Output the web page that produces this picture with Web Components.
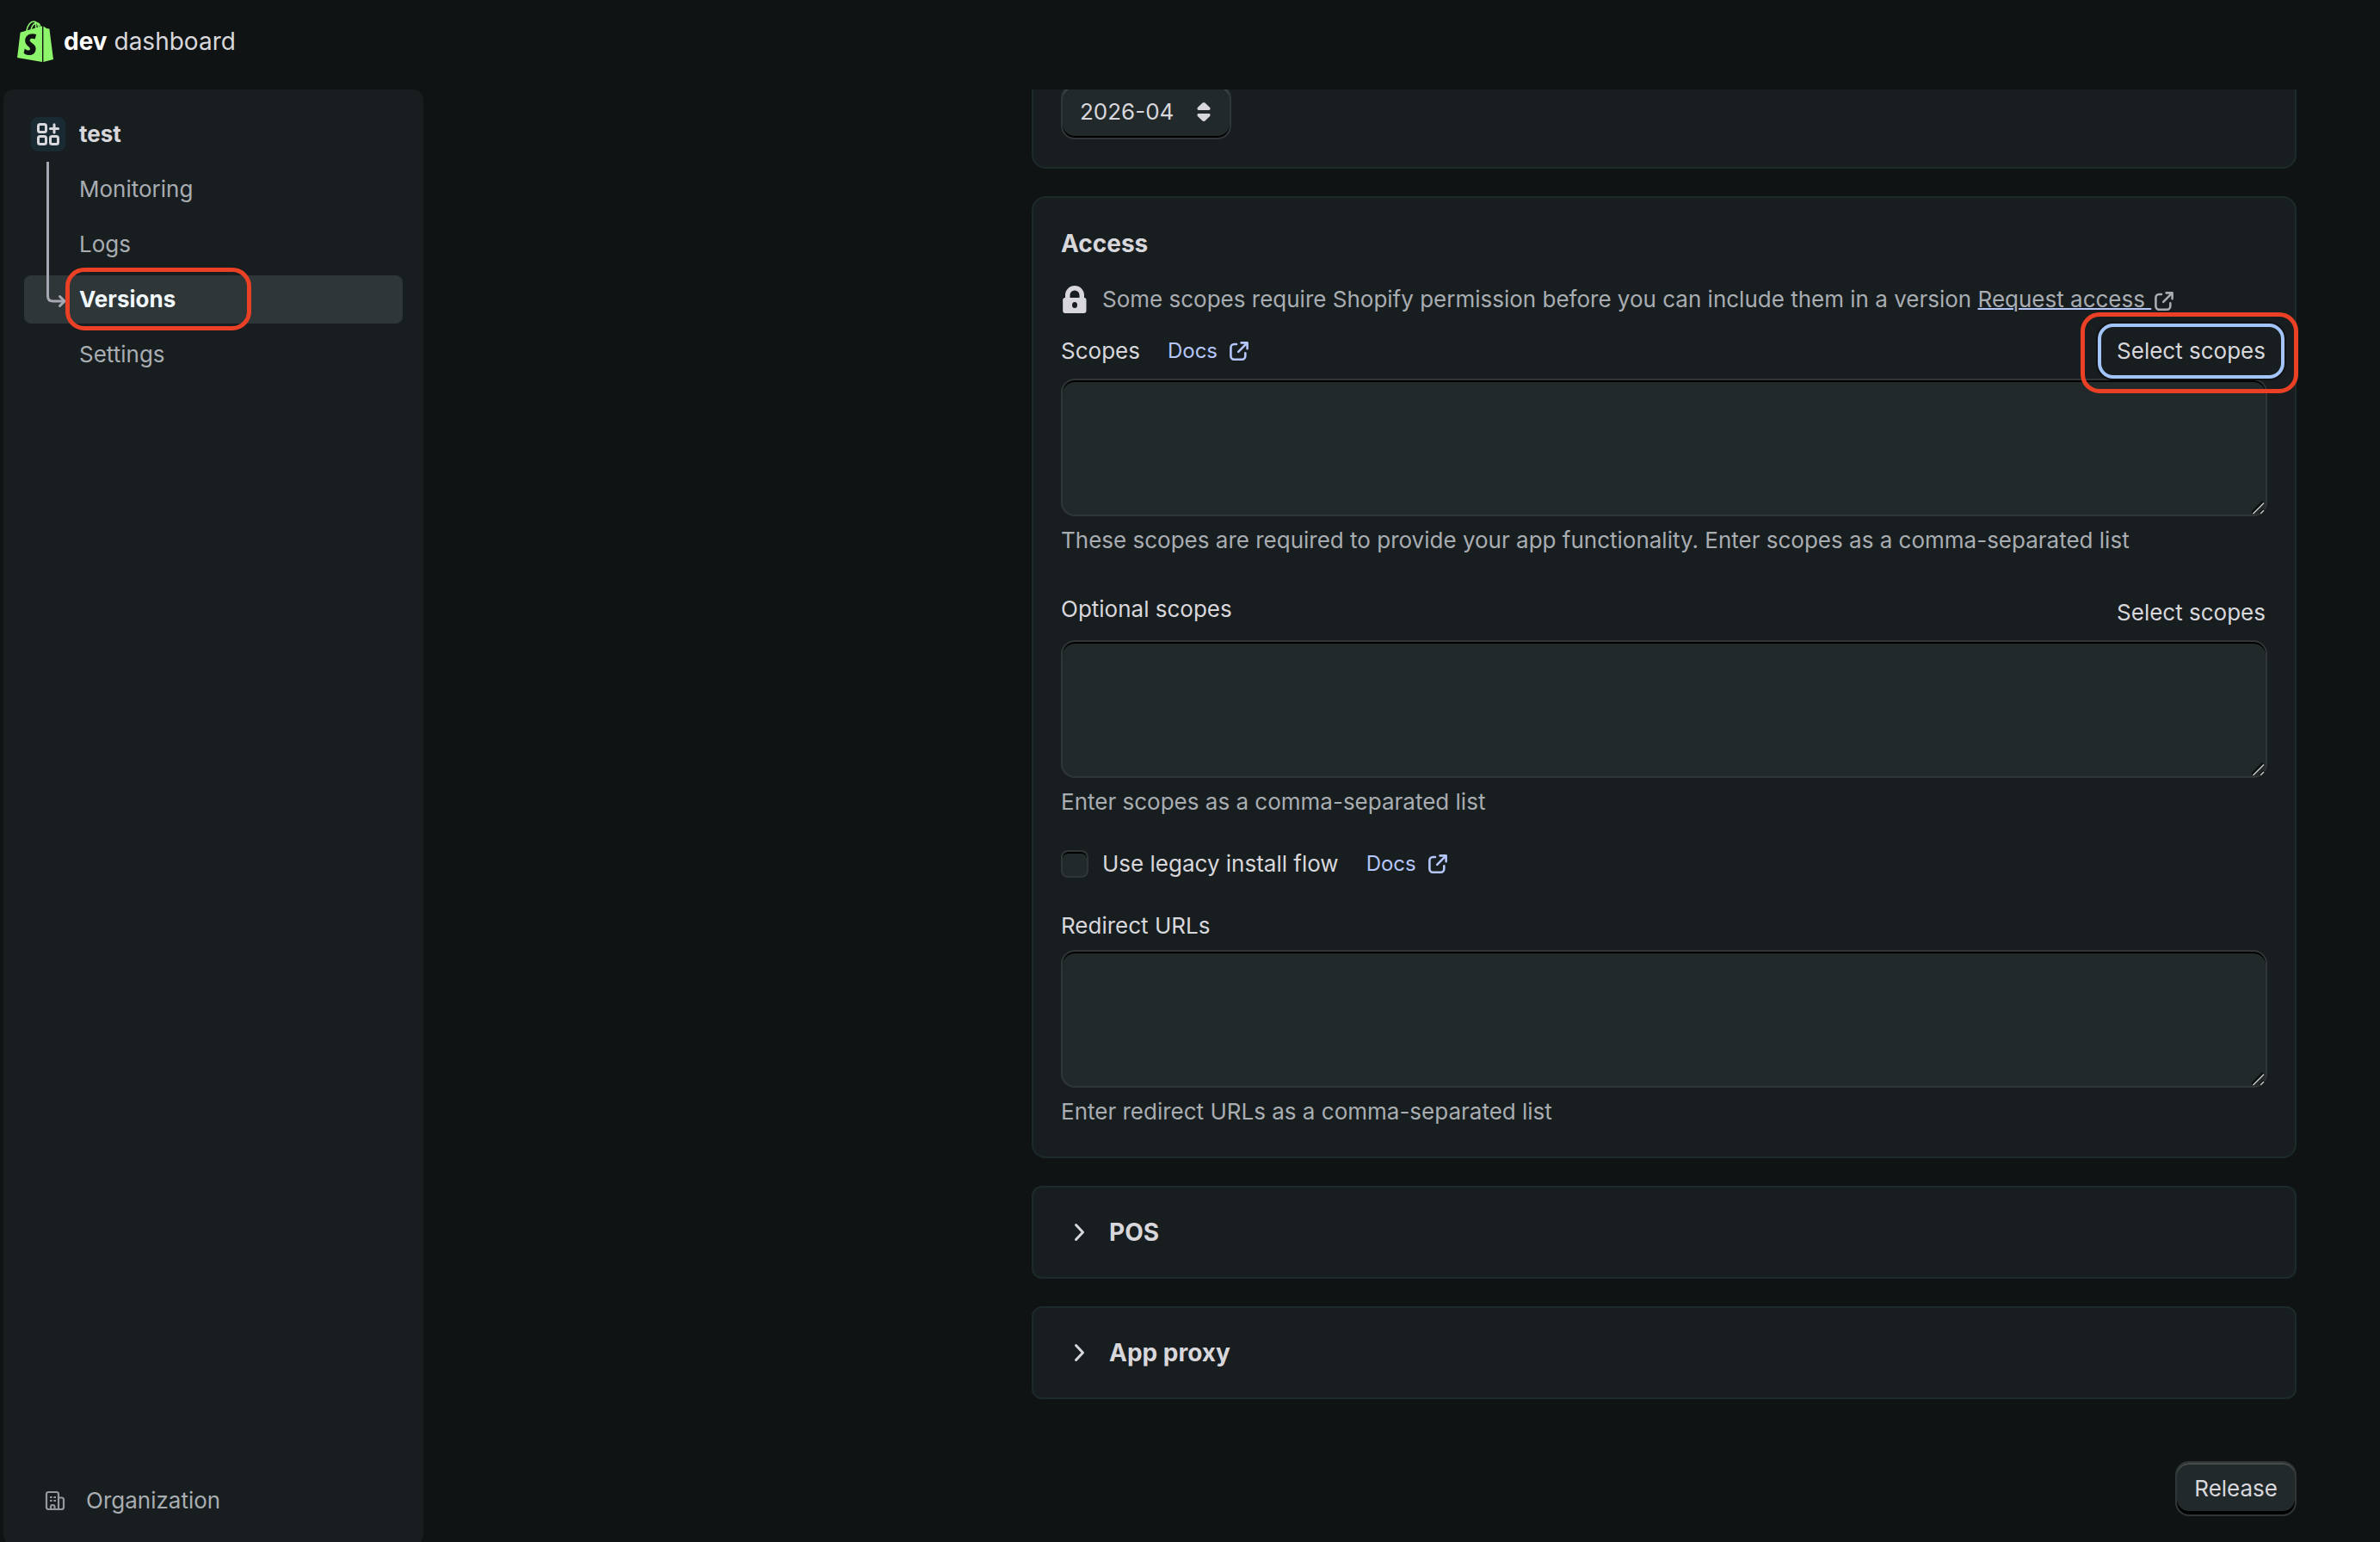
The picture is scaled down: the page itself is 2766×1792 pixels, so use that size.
<!DOCTYPE html>
<html lang="en">
<head>
<meta charset="utf-8">
<title>dev dashboard</title>
<style>
  :root {
    --bg: #0f1313;
    --surface: #181d1f;
    --active: #2f3637;
    --field: #22292b;
    --field-border: #303638;
    --card-border: #1c2a2c;
    --text: #d8d7dc;
    --subdued: #a8adb2;
    --link: #b5c6fa;
    --focus: #a4c5fb;
    --mark: #ea4025;
  }
  html, body { height: 100%; }
  body {
    margin: 0;
    background: var(--bg);
    color: var(--text);
    font: 26px/40px Inter, sans-serif;
    overflow: hidden;
  }
</style>
</head>
<body>
<dev-shell>
  <dev-brand slot="header"></dev-brand>
  <app-nav slot="nav" app="test" items="Monitoring,Logs,Versions,Settings" current="Versions"></app-nav>

  <settings-card>
    <version-select value="2026-04"></version-select>
  </settings-card>

  <settings-card heading="Access">
    <access-note>Some scopes require Shopify permission before you can include them in a version</access-note>
    <scope-field label="Scopes" docs picker marked help="These scopes are required to provide your app functionality. Enter scopes as a comma-separated list"></scope-field>
    <scope-field label="Optional scopes" picker help="Enter scopes as a comma-separated list"></scope-field>
    <check-field label="Use legacy install flow"></check-field>
    <scope-field label="Redirect URLs" help="Enter redirect URLs as a comma-separated list"></scope-field>
  </settings-card>

  <settings-section>POS</settings-section>
  <settings-section>App proxy</settings-section>
  <release-button>Release</release-button>
</dev-shell>

<script>
const base = `
  *, *::before, *::after { box-sizing: border-box; }
  button, textarea, select, input { font: inherit; color: inherit; margin: 0; }
  svg { display: block; flex: none; }
  a { color: inherit; }
`;

const externalIcon = `<svg width="22" height="22" viewBox="0 0 22 22" fill="none" stroke="currentColor" stroke-width="2.6" stroke-linecap="round" stroke-linejoin="round" aria-hidden="true">
    <path d="M8 3H5.2A3.9 3.9 0 0 0 1.4 6.9V16.8A3.9 3.9 0 0 0 5.2 20.7H14.4A3.9 3.9 0 0 0 18.3 16.8V13.2"/>
    <path d="M13.6 1.4H20.6V8.2M20.3 1.7 10.2 11.8"/>
  </svg>`;

// Page frame: header, sidebar and the scrolled settings column
class DevShell extends HTMLElement {
  constructor() {
    super();
    this.attachShadow({ mode: 'open' });
  }

  connectedCallback() {
    this.shadowRoot.innerHTML = `
      <style>
        ${base}
        :host { display: flex; flex-direction: column; height: 100%; overflow: hidden; }
        header { flex: none; height: 104px; padding: 24px 20px; }
        .body { flex: 1; min-height: 0; display: flex; }
        aside {
          flex: none;
          width: 488px;
          margin: 0 0 -4px 4px;
          background: var(--surface);
          border-radius: 12px;
        }
        main { flex: 1; min-width: 0; overflow: hidden; }
        .page {
          display: grid;
          grid-template-columns: 2fr 5fr;
          column-gap: 22px;
          max-width: 2080px;
          margin: -40px auto 0;
        }
        .column {
          grid-column: 2;
          min-width: 0;
          display: flex;
          flex-direction: column;
          gap: 32px;
        }
      </style>
      <header><slot name="header"></slot></header>
      <div class="body">
        <aside><slot name="nav"></slot></aside>
        <main><div class="page"><div class="column"><slot></slot></div></div></main>
      </div>
    `;
  }
}
customElements.define('dev-shell', DevShell);

class DevBrand extends HTMLElement {
  constructor() {
    super();
    this.attachShadow({ mode: 'open' });
  }

  connectedCallback() {
    this.shadowRoot.innerHTML = `
      <style>
        ${base}
        :host { display: flex; align-items: center; gap: 12px; font-size: 28px; line-height: 48px; }
        strong { color: #fff; font-weight: 700; }
      </style>
      <svg width="42" height="48" viewBox="0 0 42 48" aria-hidden="true">
        <path d="M29 6.2 4.2 13.4Q3.6 13.6 3.5 14.4L0 43 29 48Z" fill="#8df56b"/>
        <path d="M30.4 6.6 34.2 9 37.4 9.4 42 45 30.4 48Z" fill="#8df56b"/>
        <path d="M10.8 12C12 5.5 15.6 1 19 1C23 1 24.6 5 24.8 9M16 10.6C17 6 20 2.4 23 2.6C25.4 3 26.6 5.4 26.8 8M20.6 1.6C22 4 22 7 21.6 9.6" fill="none" stroke="#8df56b" stroke-width="1.6"/>
        <path d="M22.2 16 20.6 21.6C18.6 20.6 14.6 20.2 14.6 23C14.6 25.8 21.6 26.8 21.6 32.4C21.6 38 17.6 40 13.6 40C10.4 40 8.6 38.6 7.6 37.4L8.8 32.4C10.4 34 15 36 15 32.8C15 30 9.2 28.8 9.2 23.4C9.2 17 15 13.8 22.2 16Z" fill="#0f1313"/>
      </svg>
      <span><strong>dev</strong> dashboard</span>
    `;
  }
}
customElements.define('dev-brand', DevBrand);

// Sidebar tree with the elbow line that points at the current item
class AppNav extends HTMLElement {
  constructor() {
    super();
    this.attachShadow({ mode: 'open' });
  }

  connectedCallback() {
    const current = this.getAttribute('current');
    const items = this.getAttribute('items').split(',');
    const links = items.map(name => name === current
      ? `<li><a class="current" href="#${name}" aria-current="page">${name}<span class="mark"></span></a></li>`
      : `<li><a href="#${name}">${name}</a></li>`).join('');

    this.shadowRoot.innerHTML = `
      <style>
        ${base}
        :host { display: block; height: 100%; color: var(--subdued); }
        nav { height: 100%; padding: 24px; display: flex; flex-direction: column; }
        a { display: flex; align-items: center; height: 56px; border-radius: 8px; text-decoration: none; }
        .app { padding-left: 8px; gap: 16px; color: var(--text); font-weight: 700; }
        .tile {
          width: 40px;
          height: 40px;
          border-radius: 8px;
          background: #192a33;
          display: grid;
          place-items: center;
        }
        .tree { position: relative; margin-top: 8px; }
        ul { list-style: none; margin: 0; padding: 0; display: grid; gap: 8px; }
        li a { position: relative; padding-left: 64px; }
        .current { background: var(--active); color: #f1f8fb; font-weight: 700; }
        .elbow { position: absolute; left: 24px; top: -4px; pointer-events: none; }
        .mark {
          position: absolute;
          left: 48px;
          top: -9px;
          width: 216px;
          height: 73px;
          border: 5px solid var(--mark);
          border-radius: 22px;
          pointer-events: none;
          z-index: 1;
        }
        .org { margin-top: auto; padding-left: 24px; gap: 24px; }
      </style>
      <nav>
        <a class="app" href="#app">
          <span class="tile">
            <svg width="28" height="28" viewBox="0 0 28 28" fill="none" stroke="currentColor" stroke-width="3" stroke-linecap="round" aria-hidden="true">
              <rect x="2.5" y="2.5" width="9" height="9" rx="2"/>
              <rect x="2.5" y="16.5" width="9" height="9" rx="2"/>
              <rect x="16.5" y="16.5" width="9" height="9" rx="2"/>
              <path d="M21 2.8V12M16.4 7.4H25.6"/>
            </svg>
          </span>
          ${this.getAttribute('app')}
        </a>
        <div class="tree">
          <ul>${links}</ul>
          <svg class="elbow" width="26" height="172" viewBox="0 0 26 172" fill="none" stroke="#a6a9b3" stroke-width="3" aria-hidden="true">
            <path d="M3.5 0V156Q3.5 162 9.5 162H22"/>
            <path d="M17.5 156.5 23 162 17.5 167.5" stroke-linecap="round" stroke-linejoin="round"/>
          </svg>
        </div>
        <a class="org" href="#organization">
          <svg width="24" height="24" viewBox="0 0 24 24" fill="none" stroke="#96999b" stroke-width="2.2" stroke-linejoin="round" aria-hidden="true">
            <path d="M16 8.5V4.5Q16 2 13.5 2H4.5Q2 2 2 4.500V19.5Q2 22 4.5 22H19.5Q22 22 22 19.5V11Q22 8.5 19.5 8.5H16V22"/>
            <path d="M7 22V19Q7 17 9.2 17Q11.5 17 11.5 19V22"/>
            <path d="M6 8H8.6M10.4 8H13M6 12H8.6M10.4 12H13"/>
          </svg>
          Organization
        </a>
      </nav>
    `;
  }
}
customElements.define('app-nav', AppNav);

class SettingsCard extends HTMLElement {
  constructor() {
    super();
    this.attachShadow({ mode: 'open' });
  }

  connectedCallback() {
    const heading = this.getAttribute('heading');
    this.shadowRoot.innerHTML = `
      <style>
        ${base}
        :host {
          display: block;
          padding: 32px;
          background: var(--surface);
          border: 2px solid var(--card-border);
          border-radius: 16px;
        }
        h2 { margin: 0 0 24px; font-size: 28px; line-height: 42px; font-weight: 700; }
      </style>
      ${heading ? `<h2>${heading}</h2>` : ''}
      <slot></slot>
    `;
  }
}
customElements.define('settings-card', SettingsCard);

class VersionSelect extends HTMLElement {
  constructor() {
    super();
    this.attachShadow({ mode: 'open' });
  }

  connectedCallback() {
    this.shadowRoot.innerHTML = `
      <style>
        ${base}
        :host { display: block; }
        .wrap { display: inline-grid; vertical-align: top; align-items: center; }
        select, svg { grid-area: 1 / 1; }
        select {
          appearance: none;
          height: 64px;
          padding: 0 64px 0 20px;
          background: var(--field);
          border: 2px solid var(--field-border);
          border-radius: 16px;
          box-shadow: inset 0 -2px 0 #000, inset 0 2px 0 #464c4e;
        }
        svg { justify-self: end; margin-right: 24px; pointer-events: none; }
      </style>
      <div class="wrap">
        <select aria-label="API version"><option>${this.getAttribute('value')}</option></select>
        <svg width="16" height="22" viewBox="0 0 16 22" fill="currentColor" aria-hidden="true">
          <path d="M6.6.6Q8-.6 9.4.6L15.200 6Q16.2 9 14 9H2Q-.2 9 .8 6Z"/>
          <path d="M6.6 21.4Q8 22.6 9.4 21.4L15.2 16Q16.2 13 14 13H2Q-.2 13 .8 16Z"/>
        </svg>
      </div>
    `;
  }
}
customElements.define('version-select', VersionSelect);

class AccessNote extends HTMLElement {
  constructor() {
    super();
    this.attachShadow({ mode: 'open' });
  }

  connectedCallback() {
    this.shadowRoot.innerHTML = `
      <style>
        ${base}
        :host { display: flex; align-items: center; gap: 16px; color: var(--subdued); }
        .lock { color: var(--text); }
        a { text-decoration: none; }
        u { text-decoration-color: var(--link); text-decoration-thickness: 2px; white-space: pre; }
        a svg { display: inline-block; vertical-align: -4px; margin-left: 4px; }
      </style>
      <svg class="lock" width="32" height="32" viewBox="0 0 32 32" fill="currentColor" aria-hidden="true">
        <path fill-rule="evenodd" d="M5 14V11A11 11 0 0 1 27 11V14Q29.5 14 29.5 16.5V29Q29.5 32 26.5 32H5Q2.2 32 2.2 29V16.5Q2.2 14 5 14ZM10.5 14H21.5V11A5.500 5.500 0 0 0 10.5 11ZM16 19Q13 19 13 22.5Q13 26 16 26Q19 26 19 22.5Q19 19 16 19Z"/>
      </svg>
      <span><slot></slot> <a href="#request"><u>Request access </u>${externalIcon}</a></span>
    `;
  }
}
customElements.define('access-note', AccessNote);

class DocsLink extends HTMLElement {
  constructor() {
    super();
    this.attachShadow({ mode: 'open' });
  }

  connectedCallback() {
    this.shadowRoot.innerHTML = `
      <style>
        ${base}
        :host { display: block; color: var(--link); }
        a { display: flex; align-items: center; gap: 14px; text-decoration: none; font-size: 24px; }
      </style>
      <a href="#docs">Docs ${externalIcon}</a>
    `;
  }
}
customElements.define('docs-link', DocsLink);

// Label row, textarea and help line; "picker" adds the Select scopes button
class ScopeField extends HTMLElement {
  constructor() {
    super();
    this.attachShadow({ mode: 'open' });
  }

  connectedCallback() {
    const has = name => this.hasAttribute(name);
    const picker = `
      <span class="picker">
        <button type="button" class="${has('marked') ? 'focused' : ''}">Select scopes</button>
        ${has('marked') ? '<span class="mark"></span>' : ''}
      </span>`;

    this.shadowRoot.innerHTML = `
      <style>
        ${base}
        :host { display: block; margin-top: 32px; }
        :host([picker]) { margin-top: 36px; }
        :host([marked]) { margin-top: 12px; }
        .row { display: flex; align-items: flex-start; gap: 32px; margin-bottom: 8px; }
        :host([picker]) .row { min-height: 56px; margin-bottom: 4px; }
        :host([picker]) label { line-height: 48px; }
        :host([docs]) .row { align-items: center; }
        .picker { position: relative; z-index: 1; margin: 0 -16px 0 auto; }
        button {
          display: block;
          height: 56px;
          padding: 0 18px;
          background: none;
          border: 0;
          border-radius: 12px;
        }
        .focused { outline: 4px solid var(--focus); box-shadow: 0 0 0 6px #101213; border-radius: 14px; }
        .mark {
          position: absolute;
          inset: -17px -20px -21px -24px;
          border: 5px solid var(--mark);
          border-radius: 22px;
          pointer-events: none;
        }
        textarea {
          display: block;
          width: 100%;
          height: 160px;
          padding: 12px 20px;
          background: var(--field);
          border: 2px solid var(--field-border);
          border-radius: 16px;
          box-shadow: inset 0 2px 0 #000;
          resize: none;
          outline: none;
        }
        .area { position: relative; }
        .grip { position: absolute; right: 2px; bottom: 2px; pointer-events: none; }
        p { margin: 8px 0 0; color: var(--subdued); }
      </style>
      <div class="row">
        <label for="field">${this.getAttribute('label')}</label>
        ${has('docs') ? '<docs-link></docs-link>' : ''}
        ${has('picker') ? picker : ''}
      </div>
      <div class="area">
        <textarea id="field" aria-describedby="help"></textarea>
        <svg class="grip" width="16" height="16" viewBox="0 0 16 16" fill="none" aria-hidden="true">
          <path d="M0 14 13 1M9 15 14 10" stroke="#0c0f10" stroke-width="3"/>
          <path d="M1.5 15 14 2.5M10 15 14 11" stroke="#c3c5c6" stroke-width="1.5"/>
        </svg>
      </div>
      <p id="help">${this.getAttribute('help')}</p>
    `;
  }
}
customElements.define('scope-field', ScopeField);

class CheckField extends HTMLElement {
  constructor() {
    super();
    this.attachShadow({ mode: 'open' });
  }

  connectedCallback() {
    this.shadowRoot.innerHTML = `
      <style>
        ${base}
        :host { display: flex; align-items: center; gap: 32px; margin-top: 32px; }
        label { display: flex; align-items: center; gap: 16px; }
        input {
          appearance: none;
          width: 32px;
          height: 32px;
          background: var(--field);
          border: 2px solid var(--field-border);
          border-radius: 8px;
          box-shadow: inset 0 2px 0 #000;
        }
      </style>
      <label><input type="checkbox">${this.getAttribute('label')}</label>
      <docs-link></docs-link>
    `;
  }
}
customElements.define('check-field', CheckField);

// Collapsed card
class SettingsSection extends HTMLElement {
  constructor() {
    super();
    this.attachShadow({ mode: 'open' });
  }

  connectedCallback() {
    this.shadowRoot.innerHTML = `
      <style>
        ${base}
        :host {
          display: block;
          background: var(--surface);
          border: 2px solid var(--card-border);
          border-radius: 12px;
        }
        h2 { margin: 0; font-size: 28px; }
        button {
          display: flex;
          align-items: center;
          gap: 16px;
          width: 100%;
          padding: 32px;
          background: none;
          border: 0;
          font-weight: 700;
          line-height: 40px;
          text-align: left;
        }
      </style>
      <h2>
        <button type="button" aria-expanded="false">
          <svg width="40" height="40" viewBox="0 0 40 40" fill="none" stroke="currentColor" stroke-width="3" stroke-linecap="round" stroke-linejoin="round" aria-hidden="true">
            <path d="M17.5 11.500 25.5 20 17.5 28.5"/>
          </svg>
          <slot></slot>
        </button>
      </h2>
    `;
  }
}
customElements.define('settings-section', SettingsSection);

class ReleaseButton extends HTMLElement {
  constructor() {
    super();
    this.attachShadow({ mode: 'open' });
  }

  connectedCallback() {
    this.shadowRoot.innerHTML = `
      <style>
        ${base}
        :host { display: flex; justify-content: flex-end; margin-top: 40px; }
        button {
          height: 64px;
          padding: 0 20px;
          background: var(--field);
          border: 2px solid var(--field-border);
          border-radius: 16px;
          box-shadow: inset 0 -4px 0 #000, inset 0 2px 0 #464c4e;
        }
      </style>
      <button type="button"><slot></slot></button>
    `;
  }
}
customElements.define('release-button', ReleaseButton);
</script>
</body>
</html>
